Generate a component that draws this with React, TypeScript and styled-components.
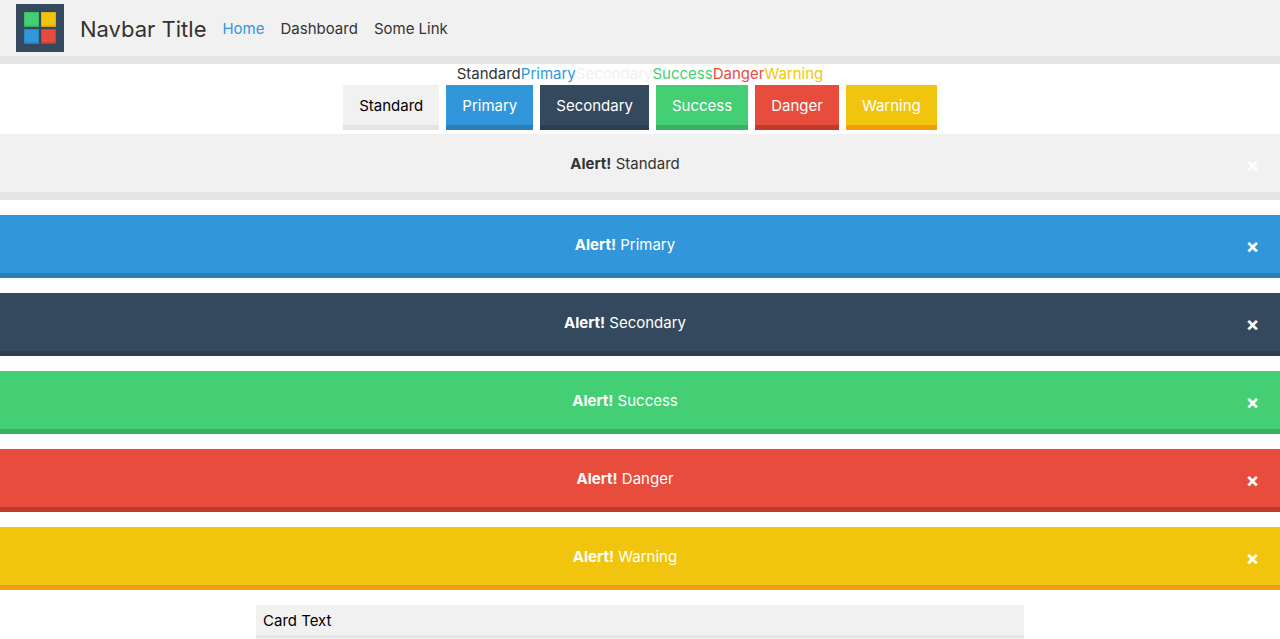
import React from "react";
import styled, { createGlobalStyle } from "styled-components";

type Tone = "standard" | "primary" | "secondary" | "success" | "danger" | "warning";

const tones: Record<Tone, { fill: string; edge: string; text: string }> = {
  standard: { fill: "#f1f1f1", edge: "#e4e4e4", text: "#333333" },
  primary: { fill: "#3197da", edge: "#2980b9", text: "#3197da" },
  secondary: { fill: "#34495e", edge: "#2d3e50", text: "#f1f1f1" },
  success: { fill: "#45cf74", edge: "#3bb062", text: "#45cf74" },
  danger: { fill: "#e84c3d", edge: "#c0392b", text: "#e84c3d" },
  warning: { fill: "#f1c50e", edge: "#f39c12", text: "#f1c50e" },
};

const items: { tone: Tone; label: string }[] = [
  { tone: "standard", label: "Standard" },
  { tone: "primary", label: "Primary" },
  { tone: "secondary", label: "Secondary" },
  { tone: "success", label: "Success" },
  { tone: "danger", label: "Danger" },
  { tone: "warning", label: "Warning" },
];

const GlobalStyle = createGlobalStyle`
  * { box-sizing: border-box; }
  body {
    margin: 0;
    background: #ffffff;
    color: #333333;
    font-family: Inter, "Liberation Sans", sans-serif;
    font-size: 15px;
    line-height: 20px;
  }
`;

const Page = styled.div`
  display: flex;
  flex-direction: column;
  min-height: 100vh;
`;

const Navbar = styled.nav`
  display: flex;
  align-items: center;
  gap: 16px;
  padding: 4px 16px;
  background: #f1f1f1;
  border-bottom: 8px solid #e4e4e4;
`;

const Logo = styled.svg`
  display: block;
  width: 48px;
  height: 48px;
`;

const Title = styled.span`
  padding-top: 2px;
  font-size: 22px;
  line-height: 32px;
`;

const NavLink = styled.a<{ $active?: boolean }>`
  padding-top: 2px;
  color: ${(p) => (p.$active ? tones.primary.text : "#333333")};
  text-decoration: none;
`;

const TextRow = styled.div`
  display: flex;
  justify-content: center;
`;

const ToneText = styled.span<{ $tone: Tone }>`
  color: ${(p) => tones[p.$tone].text};
`;

const ButtonRow = styled.div`
  display: flex;
  justify-content: center;
  gap: 7px;
  padding: 1px 0 4px;
`;

const Button = styled.button<{ $tone: Tone }>`
  padding: 11px 16px 9px;
  border: 0;
  border-bottom: 5px solid ${(p) => tones[p.$tone].edge};
  background: ${(p) => tones[p.$tone].fill};
  color: ${(p) => (p.$tone === "standard" ? "#000000" : "#ffffff")};
  font: inherit;
`;

const Alerts = styled.div`
  display: flex;
  flex-direction: column;
  gap: 15px;
`;

const Alert = styled.div<{ $tone: Tone }>`
  display: flex;
  align-items: center;
  padding: 20px 16px 18px;
  border-bottom: ${(p) => (p.$tone === "standard" ? 8 : 5)}px solid ${(p) => tones[p.$tone].edge};
  background: ${(p) => tones[p.$tone].fill};
  color: ${(p) => (p.$tone === "standard" ? "#333333" : "#ffffff")};
`;

const AlertText = styled.span`
  flex: 1;
  text-align: center;
`;

const Close = styled.button`
  width: 30px;
  padding: 2px 0 0 7px;
  border: 0;
  background: transparent;
  color: #ffffff;
  font: inherit;
  font-size: 20px;
  line-height: 16px;
  font-weight: 700;
`;

const Card = styled.section`
  flex: 1;
  width: 60%;
  margin: 15px auto 0;
  background: #f1f1f1;
  color: #000000;
`;

const CardHeader = styled.header`
  padding: 6px 7px 4px;
  border-bottom: 3px solid #e4e4e4;
`;

const tiles = [
  { x: 8, y: 8, fill: tones.success.fill, edge: tones.success.edge },
  { x: 25, y: 8, fill: tones.warning.fill, edge: "#d9a40f" },
  { x: 8, y: 25, fill: tones.primary.fill, edge: tones.primary.edge },
  { x: 25, y: 25, fill: tones.danger.fill, edge: tones.danger.edge },
];

export default function App() {
  return (
    <Page>
      <GlobalStyle />
      <Navbar>
        <Logo viewBox="0 0 48 48" aria-hidden="true">
          <rect width="48" height="48" fill="#34495e" />
          {tiles.map((t) => (
            <g key={`${t.x}-${t.y}`}>
              <rect x={t.x} y={t.y} width="15" height="15" fill={t.edge} />
              <rect x={t.x + 0.6} y={t.y + 0.6} width="13.8" height="12.8" fill={t.fill} />
            </g>
          ))}
        </Logo>
        <Title>Navbar Title</Title>
        <NavLink href="#home" $active>Home</NavLink>
        <NavLink href="#dashboard">Dashboard</NavLink>
        <NavLink href="#link">Some Link</NavLink>
      </Navbar>
      <TextRow>
        {items.map((i) => (
          <ToneText key={i.tone} $tone={i.tone}>{i.label}</ToneText>
        ))}
      </TextRow>
      <ButtonRow>
        {items.map((i) => (
          <Button key={i.tone} type="button" $tone={i.tone}>{i.label}</Button>
        ))}
      </ButtonRow>
      <Alerts>
        {items.map((i) => (
          <Alert key={i.tone} role="alert" $tone={i.tone}>
            <AlertText><strong>Alert!</strong> {i.label}</AlertText>
            <Close type="button" aria-label="Close">×</Close>
          </Alert>
        ))}
      </Alerts>
      <Card>
        <CardHeader>Card Text</CardHeader>
      </Card>
    </Page>
  );
}
